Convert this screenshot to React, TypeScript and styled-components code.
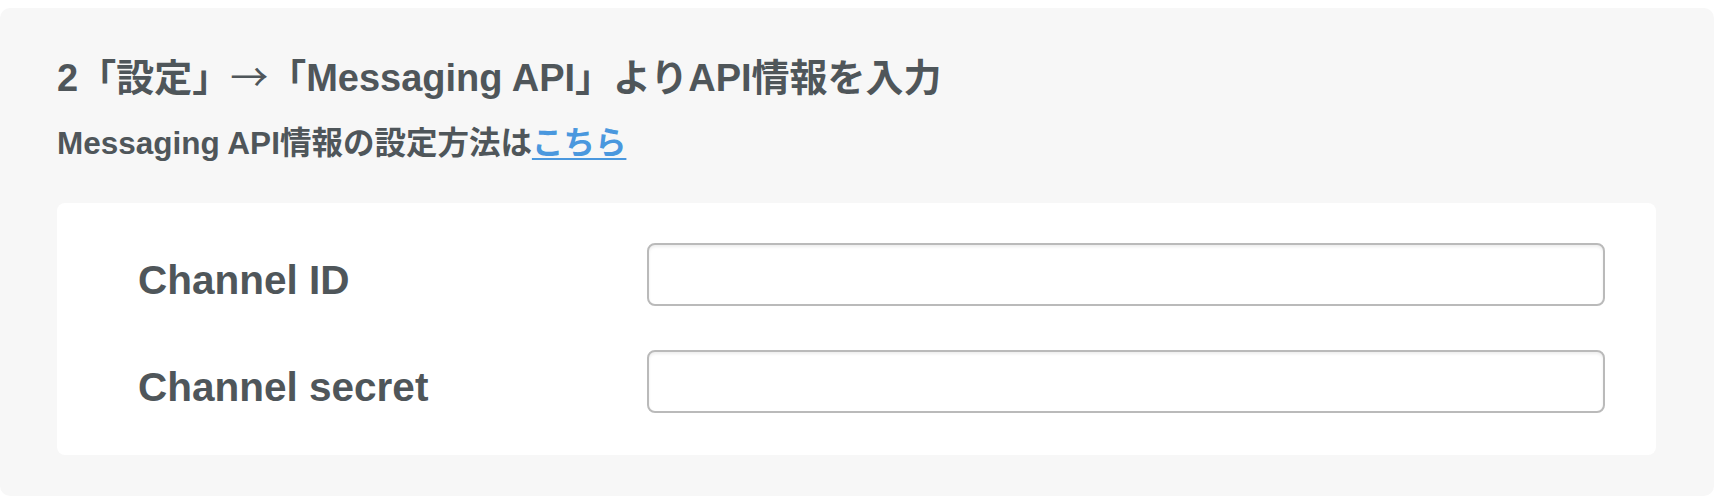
import styled, { createGlobalStyle } from "styled-components";

const GlobalStyle = createGlobalStyle`
  body {
    margin: 0;
    background: #ffffff;
    font-family: "Liberation Sans", "Noto Sans CJK JP", sans-serif;
    color: #4f565a;
  }
`;

const fields = [
  { id: "channel-id", label: "Channel ID" },
  { id: "channel-secret", label: "Channel secret" },
];

const App = () => {
  return (
    <>
      <GlobalStyle />
      <StepSection>
        <StepTitle>
          2「設定」<Arrow>→</Arrow>「Messaging API」よりAPI情報を入力
        </StepTitle>
        <StepNote>
          Messaging API情報の設定方法は<HelpLink href="#">こちら</HelpLink>
        </StepNote>
        <FormCard>
          {fields.map((f) => (
            <FieldRow key={f.id}>
              <FieldLabel htmlFor={f.id}>{f.label}</FieldLabel>
              <TextInput id={f.id} type="text" />
            </FieldRow>
          ))}
        </FormCard>
      </StepSection>
    </>
  );
};

export default App;

const StepSection = styled.section`
  margin: 8px 4px 0 0;
  padding: 45px 58px 41px 57px;
  background: #f7f7f7;
  border-radius: 10px;
`;

const StepTitle = styled.h2`
  margin: 0;
  font-size: 38px;
  line-height: 44px;
  font-weight: 700;
`;

const Arrow = styled.span`
  font-family: "Noto Sans CJK JP", sans-serif;
  font-weight: 400;
`;

const StepNote = styled.p`
  margin: 25px 0 0;
  font-size: 31.5px;
  line-height: 36px;
  font-weight: 700;
`;

const HelpLink = styled.a`
  color: #4a98de;
  text-decoration: underline;
  text-underline-offset: 4px;
  text-decoration-thickness: 2px;
`;

const FormCard = styled.div`
  margin-top: 42px;
  background: #ffffff;
  border-radius: 8px;
  padding: 40px 51px 42px 81px;
  display: flex;
  flex-direction: column;
  gap: 44px;
`;

const FieldRow = styled.div`
  display: grid;
  grid-template-columns: 509px 1fr;
  align-items: center;
`;

const FieldLabel = styled.label`
  padding-top: 11px;
  font-size: 40.5px;
  line-height: 46px;
  font-weight: 700;
`;

const TextInput = styled.input`
  box-sizing: border-box;
  width: 100%;
  height: 63px;
  border: 2px solid #bababa;
  border-radius: 8px;
  background: #ffffff;
  box-shadow: inset 0 2px 3px rgba(0, 0, 0, 0.07);
  font-size: 28px;
  padding: 0 14px;
  outline: none;
`;
